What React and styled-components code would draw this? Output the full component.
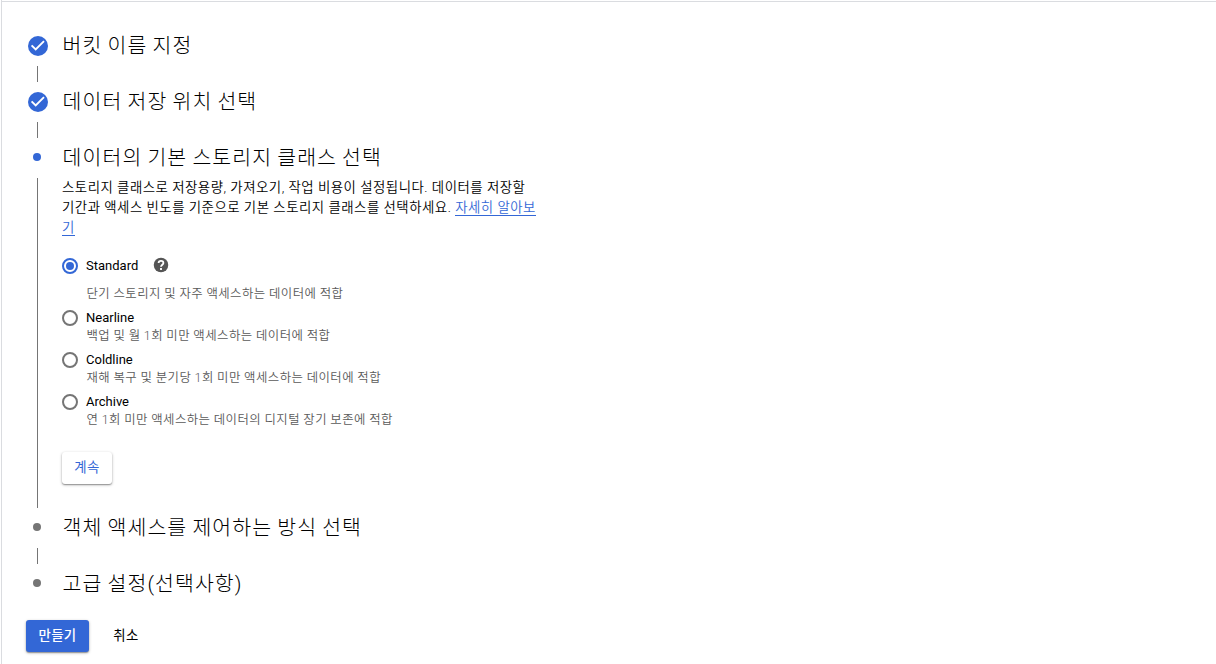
import React from "react";
import styled, { createGlobalStyle } from "styled-components";

const GlobalStyle = createGlobalStyle`
  * { box-sizing: border-box; }
  body {
    margin: 0;
    background: #fff;
    color: #000;
    font-family: Roboto, "Noto Sans CJK KR", sans-serif;
    font-size: 13px;
  }
`;

const Panel = styled.main`
  height: 664px;
  margin-left: 1px;
  padding: 25px 24px 0;
  border-left: 1px solid #dadce0;
  overflow: hidden;
  background: linear-gradient(#dadce0, #dadce0) 0 1px / 100% 1px no-repeat;
`;

const Stepper = styled.ol`
  list-style: none;
  margin: 0;
  padding: 1px 0 0;
`;

const StepHeader = styled.div`
  display: flex;
  align-items: center;
  height: 40px;
`;

const Marker = styled.span`
  display: flex;
  align-items: center;
  justify-content: center;
  width: 24px;
  flex: none;
`;

const Dot = styled.span`
  width: 8px;
  height: 8px;
  margin: 0 2px 2px 0;
  border-radius: 50%;
  background: ${(p) => (p.$active ? "#3367d6" : "#757575")};
`;

const Title = styled.h2`
  margin: 0 0 1px 12.6px;
  font-size: 20.5px;
  line-height: 28px;
  font-weight: 300;
  white-space: nowrap;
  letter-spacing: 1.08px;
  word-spacing: -1px;
`;

const StepBody = styled.div`
  margin-left: 11px;
  padding-left: 24px;
  height: ${(p) => p.$height}px;
  border-left: 1px solid #757575;
`;

const Intro = styled.p`
  margin: 0;
  width: 490px;
  font-size: 13.4px;
  line-height: 20px;
  font-weight: 350;
  letter-spacing: 0.51px;
`;

const Line = styled.span`
  display: block;
  white-space: nowrap;
`;

const Link = styled.a`
  display: inline-block;
  height: 18px;
  color: #3367d6;
  border-bottom: 1px solid #3367d6;
`;

const Options = styled.div`
  padding-top: 18px;
`;

const Option = styled.label`
  display: grid;
  grid-template-columns: 16px 1fr;
  column-gap: 8px;
  align-items: center;
  grid-template-rows: ${(p) => (p.$spaced ? "20px 32px" : "20px 22px")};
`;

const Radio = styled.span`
  display: flex;
  align-items: center;
  justify-content: center;
  width: 16px;
  height: 16px;
  border: 2px solid ${(p) => (p.$checked ? "#3367d6" : "#757575")};
  border-radius: 50%;
  &::after {
    content: "";
    width: 8px;
    height: 8px;
    border-radius: 50%;
    background: ${(p) => (p.$checked ? "#3367d6" : "transparent")};
  }
`;

const OptionName = styled.span`
  display: flex;
  align-items: center;
  gap: 15px;
  height: 20px;
  line-height: 20px;

  svg {
    margin-bottom: 2px;
  }
`;

const Description = styled.span`
  grid-column: 2;
  align-self: start;
  padding-top: ${(p) => (p.$spaced ? "10px" : "0")};
  padding-left: 0.5px;
  font-size: 12.4px;
  letter-spacing: 0.45px;
  word-spacing: -0.15px;
  line-height: 16px;
  font-weight: 350;
  color: #5a5a5a;
  white-space: nowrap;
`;

const Button = styled.button`
  height: 32px;
  padding: 0 0 ${(p) => (p.$kind === "raised" ? 4 : 3)}px;
  width: ${(p) => p.$width}px;
  border: 0;
  border-radius: 3px;
  font: ${(p) => (p.$kind === "primary" ? 500 : 400)} 13.4px Roboto, "Noto Sans CJK KR", sans-serif;
  letter-spacing: 0.4px;
  color: ${(p) => (p.$kind === "primary" ? "#fff" : p.$kind === "raised" ? "#3367d6" : "#000")};
  background: ${(p) => (p.$kind === "primary" ? "#3367d6" : "#fff")};
  box-shadow: ${(p) => (p.$kind === "text" ? "none" : "0 1px 3px rgba(0,0,0,.3), 0 1px 1px rgba(0,0,0,.25)")};
`;

const Continue = styled.div`
  display: flex;
  padding-top: 18px;
`;

const Footer = styled.footer`
  display: flex;
  gap: 12px;
  padding-top: 16px;

  button {
    padding-bottom: 4px;
  }
`;

const CheckIcon = () => (
  <svg width="20" height="20" viewBox="0 0 20 20">
    <circle cx="10" cy="10" r="10" fill="#3367d6" />
    <path d="M3.6 9.3 7.7 13.4 16 5.1" fill="none" stroke="#fff" strokeWidth="1.9" />
  </svg>
);

const HelpIcon = () => (
  <svg width="16" height="16" viewBox="1 1 22 22" fill="#555">
    <circle cx="12" cy="12" r="10" />
    <path d="M8.7 9.4c0-4.2 6.6-4.2 6.6-.3 0 2.4-3.3 2.6-3.3 5.4" fill="none" stroke="#fff" strokeWidth="2.5" />
    <path d="M10.7 16.2h2.6v2.6h-2.6z" fill="#fff" />
  </svg>
);

const storageClasses = [
  { name: "Standard", text: "단기 스토리지 및 자주 액세스하는 데이터에 적합", checked: true },
  { name: "Nearline", text: "백업 및 월 1회 미만 액세스하는 데이터에 적합" },
  { name: "Coldline", text: "재해 복구 및 분기당 1회 미만 액세스하는 데이터에 적합" },
  { name: "Archive", text: "연 1회 미만 액세스하는 데이터의 디지털 장기 보존에 적합" },
];

function Step({ title, state, height = 16, last, children }) {
  return (
    <li>
      <StepHeader>
        <Marker>{state === "done" ? <CheckIcon /> : <Dot $active={state === "active"} />}</Marker>
        <Title>{title}</Title>
      </StepHeader>
      {!last && <StepBody $height={height}>{children}</StepBody>}
    </li>
  );
}

export default function App() {
  return (
    <>
      <GlobalStyle />
      <Panel>
        <Stepper>
          <Step title="버킷 이름 지정" state="done" />
          <Step title="데이터 저장 위치 선택" state="done" />
          <Step title="데이터의 기본 스토리지 클래스 선택" state="active" height={330}>
            <Intro>
              <Line>스토리지 클래스로 저장용량, 가져오기, 작업 비용이 설정됩니다. 데이터를 저장할</Line>
              <Line>
                기간과 액세스 빈도를 기준으로 기본 스토리지 클래스를 선택하세요. <Link>자세히 알아보</Link>
              </Line>
              <Line>
                <Link>기</Link>
              </Line>
            </Intro>
            <Options>
              {storageClasses.map((o) => (
                <Option key={o.name} $spaced={o.checked}>
                  <Radio $checked={o.checked} />
                  <OptionName>
                    {o.name}
                    {o.checked && <HelpIcon />}
                  </OptionName>
                  <Description $spaced={o.checked}>{o.text}</Description>
                </Option>
              ))}
            </Options>
            <Continue>
              <Button $kind="raised" $width={50}>계속</Button>
            </Continue>
          </Step>
          <Step title="객체 액세스를 제어하는 방식 선택" />
          <Step title="고급 설정(선택사항)" last />
        </Stepper>
        <Footer>
          <Button $kind="primary" $width={63}>만들기</Button>
          <Button $kind="text" $width={50}>취소</Button>
        </Footer>
      </Panel>
    </>
  );
}
